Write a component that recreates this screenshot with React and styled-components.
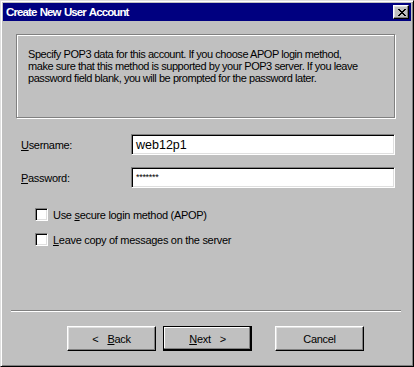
import React from 'react';
import styled, { createGlobalStyle, css } from 'styled-components';

const Global = createGlobalStyle`
  html, body { margin:0; padding:0; background:#c0c0c0; }
  body {
    font-family:"Liberation Sans", Arial, sans-serif;
    font-size:11px;
    letter-spacing:-0.3px;
    color:#000;
  }
`

const Window = styled.div`
  box-sizing:border-box;
  width:414px;
  height:367px;
  background:#c0c0c0;
  border:1px solid;
  border-color:#dfdfdf #000 #000 #dfdfdf;
  box-shadow:inset 1px 1px 0 #fff, inset -1px -1px 0 #808080;
  padding:2px;
  display:flex;
  flex-direction:column;
`
const TitleBar = styled.div`
  height:18px;
  flex:none;
  background:#000080;
  color:#fff;
  font-weight:bold;
  font-size:11.5px;
  letter-spacing:-0.9px;
  word-spacing:1px;
  display:flex;
  align-items:center;
  justify-content:space-between;
  padding:0 2px 0 3px;
`
const CloseBtn = styled.div`
  box-sizing:border-box;
  width:16px;
  height:14px;
  background:#c0c0c0;
  border:1px solid;
  border-color:#fff #000 #000 #fff;
  box-shadow:inset -1px -1px 0 #808080, inset 1px 1px 0 #dfdfdf;
  display:flex;
  align-items:center;
  justify-content:center;
  padding-left:1px;
`
const InfoBox = styled.div`
  box-sizing:border-box;
  margin:13px 16px 0 13px;
  height:84px;
  border:1px solid #808080;
  box-shadow:inset 1px 1px 0 #fff, 1px 1px 0 #fff;
  padding:13px 11px;
  line-height:12px;
  letter-spacing:-0.45px;
  white-space:nowrap;
`
const Form = styled.div`
  display:flex;
  flex-direction:column;
  gap:12px;
  margin:16px 0 0 18px;
`
const Row = styled.div`
  display:flex;
  align-items:center;
`
const Label = styled.label`
  width:110px;
`
const Field = styled.div`
  box-sizing:border-box;
  width:264px;
  height:21px;
  background:#fff;
  border:1px solid;
  border-color:#808080 #fff #fff #808080;
  box-shadow:inset 1px 1px 0 #000, inset -1px -1px 0 #dfdfdf;
  padding:0 4px;
  display:flex;
  align-items:center;
  font-size:${p => p.$small ? '9px' : '12.5px'};
  letter-spacing:0;
  ${p => p.$small && css`align-items:flex-start; padding-top:4px; letter-spacing:-0.3px;`}
`
const Options = styled.div`
  display:flex;
  flex-direction:column;
  gap:12px;
  margin:20px 0 0 32px;
`
const Check = styled.span`
  box-sizing:border-box;
  width:13px;
  height:13px;
  flex:none;
  background:#fff;
  border:1px solid;
  border-color:#808080 #fff #fff #808080;
  box-shadow:inset 1px 1px 0 #000, inset -1px -1px 0 #dfdfdf;
  margin-right:5px;
`
const Separator = styled.div`
  margin:auto 10px 0 8px;
  height:0;
  border-top:1px solid #808080;
  border-bottom:1px solid #fff;
`
const Buttons = styled.div`
  display:flex;
  padding:14px 0 13px 64px;
`
const Button = styled.button`
  box-sizing:border-box;
  width:89px;
  height:25px;
  padding:0;
  background:#c0c0c0;
  font:inherit;
  letter-spacing:inherit;
  color:#000;
  margin-right:${p => p.$gap || 0}px;
  border:1px solid;
  border-color:#fff #000 #000 #fff;
  box-shadow:inset -1px -1px 0 #808080, inset 1px 1px 0 #dfdfdf;
  ${p => p.$default && css`
    border-color:#000;
    box-shadow:inset -1px -1px 0 #000, inset -2px -2px 0 #808080, inset 1px 1px 0 #fff;
  `}
`
const Arrow = styled.span`
  margin:${p => p.$left ? '0 9px 0 0' : '0 0 0 9px'};
`

const X_PATTERN = [
  'XX....XX',
  '.XX..XX.',
  '..XXXX..',
  '...XX...',
  '..XXXX..',
  '.XX..XX.',
  'XX....XX',
]

const CloseGlyph = () => (
  <svg width="8" height="7" viewBox="0 0 8 7" shapeRendering="crispEdges">
    {X_PATTERN.map((r, y) => r.split('').map((c, x) => c === 'X'
      ? <rect key={x + '-' + y} x={x} y={y} width="1" height="1" fill="#000" />
      : null))}
  </svg>
)

export default function App() {
  return (
    <>
      <Global />
      <Window>
        <TitleBar>
          <span>Create New User Account</span>
          <CloseBtn><CloseGlyph /></CloseBtn>
        </TitleBar>
        <InfoBox>
          Specify POP3 data for this account. If you choose APOP login method,<br />
          make sure that this method is supported by your POP3 server. If you leave<br />
          password field blank, you will be prompted for the password later.
        </InfoBox>
        <Form>
          <Row>
            <Label><u>U</u>sername:</Label>
            <Field>web12p1</Field>
          </Row>
          <Row>
            <Label><u>P</u>assword:</Label>
            <Field $small>*******</Field>
          </Row>
        </Form>
        <Options>
          <Row><Check /><span>Use <u>s</u>ecure login method (APOP)</span></Row>
          <Row><Check /><span><u>L</u>eave copy of messages on the server</span></Row>
        </Options>
        <Separator />
        <Buttons>
          <Button $gap={7}><Arrow $left>&lt;</Arrow><u>B</u>ack</Button>
          <Button $gap={23} $default><u>N</u>ext<Arrow>&gt;</Arrow></Button>
          <Button>Cancel</Button>
        </Buttons>
      </Window>
    </>
  )
}
